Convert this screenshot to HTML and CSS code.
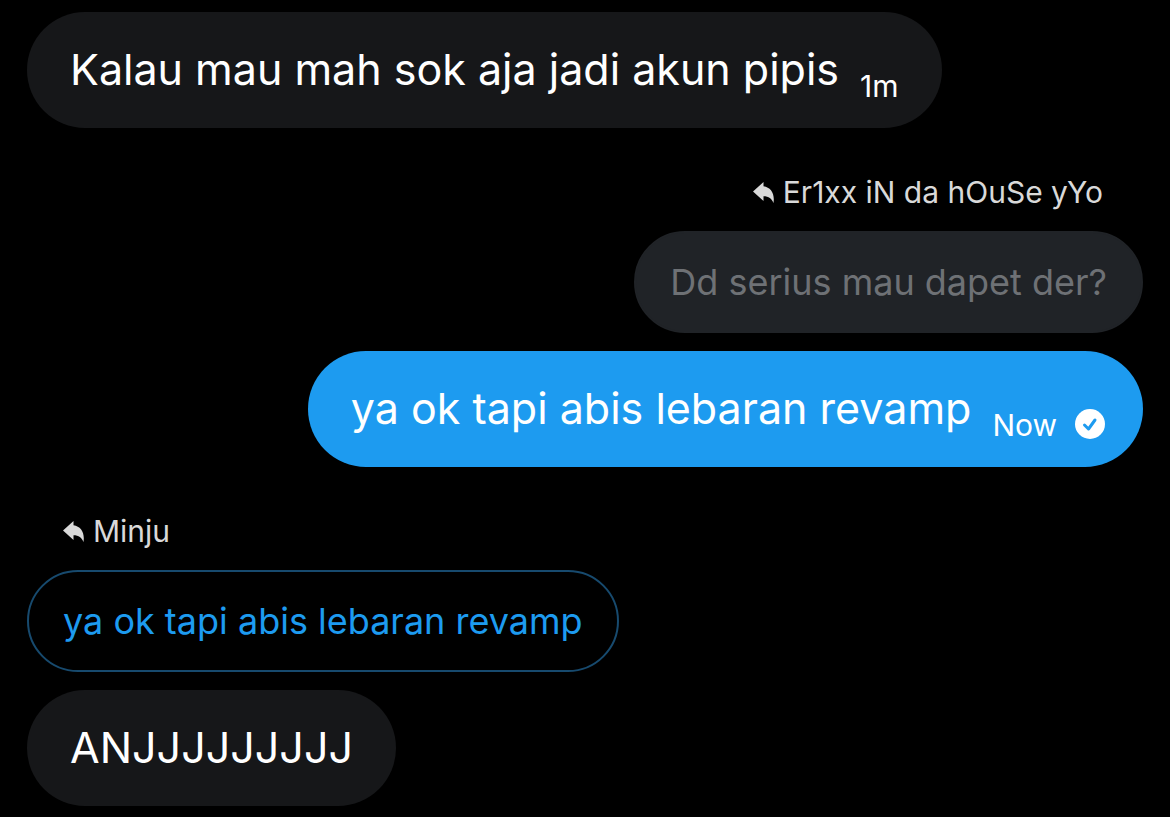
FILE: index.html
```html
<!DOCTYPE html>
<html lang="id">
<head>
<meta charset="UTF-8">
<meta name="viewport" content="width=device-width, initial-scale=1">
<title>Pesan</title>
<link rel="stylesheet" href="styles.css">
</head>
<body>

<main class="chat">
  <div class="message">
    <div class="bubble">
      <p class="text">Kalau mau mah sok aja jadi akun pipis</p>
      <time class="time">1m</time>
    </div>
  </div>

  <div class="message sent">
    <div class="reply-to">
      <svg class="reply-icon" viewBox="0 0 20 20" aria-hidden="true"><path d="M10 0v4C17 5 21 11 19.500 20 18 16 15 13.500 10 13.500V18L0 9z"/></svg>
      <span>Er1xx iN da hOuSe yYo</span>
    </div>
    <p class="quote">Dd serius mau dapet der?</p>
    <div class="bubble">
      <p class="text">ya ok tapi abis lebaran revamp</p>
      <time class="time">Now</time>
      <svg class="check" viewBox="0 0 30 30" role="img" aria-label="Terkirim"><circle cx="15" cy="15" r="15"/><path d="M9.500 16l4 4 6.500-9"/></svg>
    </div>
  </div>

  <div class="message">
    <div class="reply-to">
      <svg class="reply-icon" viewBox="0 0 20 20" aria-hidden="true"><path d="M10 0v4C17 5 21 11 19.500 20 18 16 15 13.500 10 13.500V18L0 9z"/></svg>
      <span>Minju</span>
    </div>
    <p class="quote">ya ok tapi abis lebaran revamp</p>
    <div class="bubble">
      <p class="text">ANJJJJJJJJJ</p>
    </div>
  </div>
</main>

</body>
</html>
```

FILE: styles.css
```css
body {
  margin: 0;
  background: #000;
  color: #fff;
  font-family: Inter, sans-serif;
}
p {
  margin: 0;
}
.chat {
  display: flex;
  flex-direction: column;
  gap: 43px;
  padding: 12px 27px;
}
.message {
  display: flex;
  flex-direction: column;
  align-items: flex-start;
}
.message.sent {
  align-items: flex-end;
}
.bubble {
  display: flex;
  align-items: flex-end;
  box-sizing: border-box;
  min-height: 116px;
  padding: 30px 43px 26px;
  border-radius: 58px;
  background: #161719;
}
.sent .bubble {
  padding-right: 38px;
  background: #1d9bf0;
}
.text {
  align-self: flex-start;
  font-size: 43px;
  line-height: 54px;
}
.time {
  margin-left: 21px;
  font-size: 30px;
  line-height: 32px;
}
.check {
  width: 30px;
  height: 30px;
  margin: 0 0 2px 18px;
  fill: #fff;
}
.check path {
  fill: none;
  stroke: #1d9bf0;
  stroke-width: 3;
  stroke-linecap: round;
  stroke-linejoin: round;
}
.reply-to {
  display: flex;
  align-items: center;
  gap: 9px;
  margin-bottom: 18px;
  padding: 0 36px;
  color: #d9d9d9;
  font-size: 30px;
  line-height: 42px;
}
.sent .reply-to {
  padding-right: 40px;
}
.reply-icon {
  width: 21px;
  height: 21px;
  fill: currentColor;
}
.quote {
  box-sizing: border-box;
  margin-bottom: 18px;
  padding: 24px 34px;
  border: 2px solid #174a6e;
  border-radius: 51px;
  color: #1d9bf0;
  font-size: 36px;
  line-height: 50px;
}
.sent .quote {
  border-color: #202327;
  background: #202327;
  color: #6e7175;
}
```
